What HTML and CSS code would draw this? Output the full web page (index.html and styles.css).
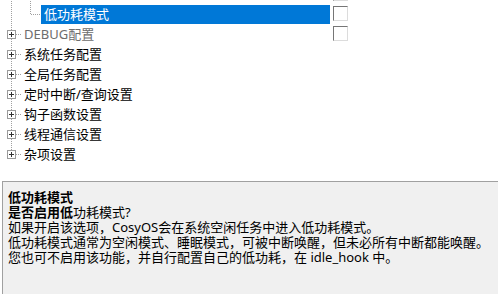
FILE: index.html
```html
<!DOCTYPE html>
<html lang="zh-CN">
<head>
<meta charset="utf-8">
<link rel="stylesheet" href="styles.css">
</head>
<body>
<div class="tree">
  <div class="list">
    <div class="row">
      <div class="node">
        <svg class="conn w41" width="41" height="20" viewBox="0 0 41 20"><path class="dot" d="M11.5 0V20M30.5 0V20M31 9.5H41"/></svg>
        <span class="label"></span>
      </div>
      <div class="val"><span class="chk"></span></div>
    </div>
    <div class="row">
      <div class="node">
        <svg class="conn w41" width="41" height="20" viewBox="0 0 41 20"><path class="dot" d="M11.5 0V20M30.5 0V10M31 9.5H41"/></svg>
        <span class="label sel">低功耗模式</span>
      </div>
      <div class="val"><span class="chk"></span></div>
    </div>
    <div class="row">
      <div class="node">
        <svg class="conn w22" width="22" height="20" viewBox="0 0 22 20"><path class="dot" d="M11.5 0V5M11.5 14V20M16 9.5H22"/><rect class="box" x="7.5" y="5.5" width="8" height="8"/><path class="plus" d="M9 9.5H14M11.5 7V12"/></svg>
        <span class="label dim">DEBUG配置</span>
      </div>
      <div class="val"><span class="chk"></span></div>
    </div>
    <div class="row">
      <div class="node">
        <svg class="conn w22" width="22" height="20" viewBox="0 0 22 20"><path class="dot" d="M11.5 0V5M11.5 14V20M16 9.5H22"/><rect class="box" x="7.5" y="5.5" width="8" height="8"/><path class="plus" d="M9 9.5H14M11.5 7V12"/></svg>
        <span class="label">系统任务配置</span>
      </div>
      <div class="val"></div>
    </div>
    <div class="row">
      <div class="node">
        <svg class="conn w22" width="22" height="20" viewBox="0 0 22 20"><path class="dot" d="M11.5 0V5M11.5 14V20M16 9.5H22"/><rect class="box" x="7.5" y="5.5" width="8" height="8"/><path class="plus" d="M9 9.5H14M11.5 7V12"/></svg>
        <span class="label">全局任务配置</span>
      </div>
      <div class="val"></div>
    </div>
    <div class="row">
      <div class="node">
        <svg class="conn w22" width="22" height="20" viewBox="0 0 22 20"><path class="dot" d="M11.5 0V5M11.5 14V20M16 9.5H22"/><rect class="box" x="7.5" y="5.5" width="8" height="8"/><path class="plus" d="M9 9.5H14M11.5 7V12"/></svg>
        <span class="label">定时中断/查询设置</span>
      </div>
      <div class="val"></div>
    </div>
    <div class="row">
      <div class="node">
        <svg class="conn w22" width="22" height="20" viewBox="0 0 22 20"><path class="dot" d="M11.5 0V5M11.5 14V20M16 9.5H22"/><rect class="box" x="7.5" y="5.5" width="8" height="8"/><path class="plus" d="M9 9.5H14M11.5 7V12"/></svg>
        <span class="label">钩子函数设置</span>
      </div>
      <div class="val"></div>
    </div>
    <div class="row">
      <div class="node">
        <svg class="conn w22" width="22" height="20" viewBox="0 0 22 20"><path class="dot" d="M11.5 0V5M11.5 14V20M16 9.5H22"/><rect class="box" x="7.5" y="5.5" width="8" height="8"/><path class="plus" d="M9 9.5H14M11.5 7V12"/></svg>
        <span class="label">线程通信设置</span>
      </div>
      <div class="val"></div>
    </div>
    <div class="row">
      <div class="node">
        <svg class="conn w22" width="22" height="20" viewBox="0 0 22 20"><path class="dot" d="M11.5 0V5M16 9.5H22"/><rect class="box" x="7.5" y="5.5" width="8" height="8"/><path class="plus" d="M9 9.5H14M11.5 7V12"/></svg>
        <span class="label">杂项设置</span>
      </div>
      <div class="val"></div>
    </div>
  </div>
</div>
<div class="panel">
  <div class="line"><b>低功耗模式</b></div>
  <div class="line"><b>是否启用低</b>功耗模式?</div>
  <div class="line">如果开启该选项，CosyOS会在系统空闲任务中进入低功耗模式。</div>
  <div class="line">低功耗模式通常为空闲模式、睡眠模式，可被中断唤醒，但未必所有中断都能唤醒。</div>
  <div class="line">您也可不启用该功能，并自行配置自己的低功耗，在 idle_hook 中。</div>
</div>
</body>
</html>
```
FILE: styles.css
```css
html, body {
  margin: 0;
  padding: 0;
  background: #ffffff;
}
body {
  width: 498px;
  height: 294px;
  overflow: hidden;
  font-family: "Noto Sans", "Noto Sans CJK SC", sans-serif;
  font-size: 13px;
  color: #000000;
}
.tree {
  height: 181px;
  overflow: hidden;
}
.list {
  margin-top: -15px;
}
.row {
  display: grid;
  grid-template-columns: 330px 1fr;
  height: 20px;
}
.node {
  display: flex;
  height: 20px;
}
.conn {
  display: block;
  flex: none;
}
.dot {
  fill: none;
  stroke: #a0a0a0;
  stroke-width: 1;
  stroke-dasharray: 1 1;
  shape-rendering: crispEdges;
}
.box {
  fill: #ffffff;
  stroke: #9a9a9a;
  stroke-width: 1;
  shape-rendering: crispEdges;
}
.plus {
  fill: none;
  stroke: #333333;
  stroke-width: 1;
  shape-rendering: crispEdges;
}
.label {
  flex: 1;
  height: 20px;
  line-height: 18px;
  padding-left: 2px;
  white-space: nowrap;
}
.w41 + .label {
  padding-left: 3px;
}
.label.sel {
  height: 19px;
  background: #0078d7;
  color: #ffffff;
}
.label.dim {
  color: #6d6d6d;
}
.val {
  padding-left: 3px;
  padding-top: 1px;
}
.chk {
  display: block;
  width: 13px;
  height: 13px;
  background: #ffffff;
  border-top: 1px solid #767676;
  border-left: 1px solid #767676;
  border-right: 1px solid #dcdcdc;
  border-bottom: 1px solid #dcdcdc;
}
.panel {
  margin-left: 2px;
  height: 113px;
  box-sizing: border-box;
  border-top: 1px solid #a0a0a0;
  border-left: 1px solid #a0a0a0;
  background: #f0f0f0;
  padding: 8px 0 0 5px;
}
.line {
  height: 15px;
  line-height: 15px;
  white-space: nowrap;
}
.line b {
  font-weight: bold;
}
```
